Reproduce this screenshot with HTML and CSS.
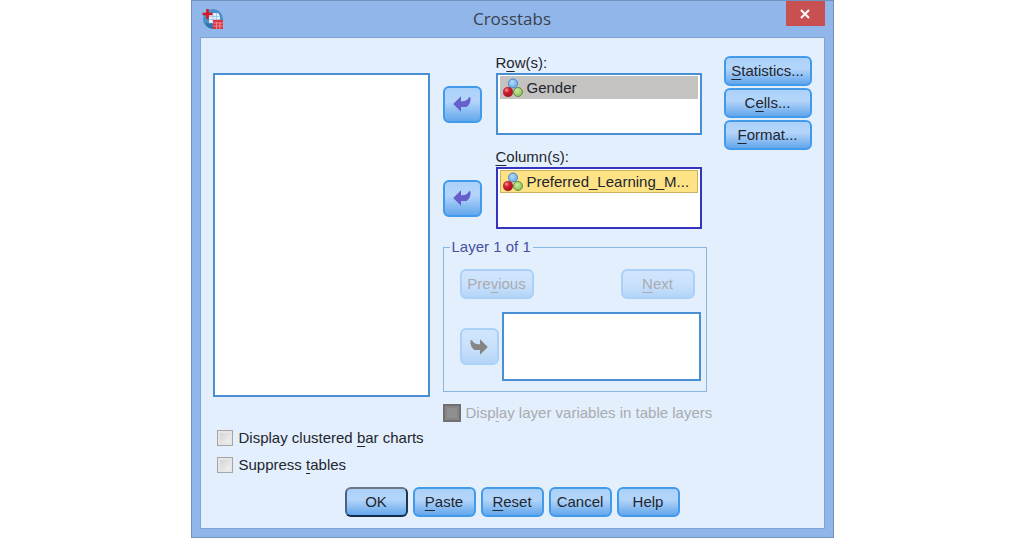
FILE: index.html
```html
<!DOCTYPE html>
<html lang="en">
  <head>
    <meta charset="UTF-8" />
    <meta name="viewport" content="width=device-width, initial-scale=1.0" />
    <title>Crosstabs</title>
    <link rel="stylesheet" href="styles.css">
  </head>
  <body>
    <!-- Shared icons -->
    <svg class="sprite" width="0" height="0" aria-hidden="true">
      <defs>
        <radialGradient id="red" cx="0.35" cy="0.3" r="0.7">
          <stop offset="0" stop-color="#f0a0a0" />
          <stop offset="0.4" stop-color="#d42030" />
          <stop offset="1" stop-color="#a81020" />
        </radialGradient>
        <radialGradient id="blue" cx="0.4" cy="0.35" r="0.7">
          <stop offset="0" stop-color="#b4dafa" />
          <stop offset="1" stop-color="#6aabe8" />
        </radialGradient>
        <radialGradient id="green" cx="0.4" cy="0.35" r="0.7">
          <stop offset="0" stop-color="#cdeaa0" />
          <stop offset="1" stop-color="#88bd58" />
        </radialGradient>
      </defs>
      <symbol id="nominal" viewBox="0 0 20 20">
        <circle cx="10" cy="5.5" r="4.5" fill="url(#blue)" stroke="#4384c8" />
        <circle cx="5" cy="14" r="4.8" fill="url(#red)" stroke="#a81828" stroke-width="0.6" />
        <circle cx="15" cy="14" r="4.5" fill="url(#green)" stroke="#5f8f3c" />
      </symbol>
      <symbol id="arrow" viewBox="0 0 18 18">
        <path d="M0.2 9 L8 1.200 V6.200 C11.500 6.800 14.500 5.500 16 2.300 L17.500 2.300 C18 6.500 16.500 10 13.500 12 H8 V16.800 Z" />
      </symbol>
    </svg>

    <main class="dialog">
      <header class="titlebar">
        <svg class="app-icon" viewBox="0 0 22 22" aria-hidden="true">
          <circle cx="11" cy="11" r="10" fill="#4a8fc6" />
          <path d="M3 15 A10 10 0 0 0 12 21 L12 16 Z" fill="#2f76b0" />
          <path d="M7 5 H16 L18 8 V15 H7 Z" fill="#e4f0fa" />
          <path d="M7 8.500 H18 M7 11.500 H18 M11 5 V15 M14.500 5 V15" stroke="#8ebbe0" stroke-width="0.7" />
          <path d="M5.500 1 V11 M0.500 6 H10.500" stroke="#d41828" stroke-width="2.600" />
          <rect x="11" y="12" width="10" height="9" fill="#dc3440" />
          <path d="M11 15 H21 M11 18 H21 M14.500 14 V21 M17.800 14 V21" stroke="#f29aa0" stroke-width="0.8" />
        </svg>
        <h1 class="title">Crosstabs</h1>
        <button class="close-btn" type="button" aria-label="Close">
          <svg width="12" height="12" viewBox="0 0 12 12"><path d="M2 2 L10 10 M10 2 L2 10" stroke="#fff" stroke-width="2" /></svg>
        </button>
      </header>

      <form class="panel">
        <div class="columns">
          <ul class="list source" role="listbox" aria-label="Variables"></ul>

          <div class="targets">
            <div class="field">
              <span class="field-label" id="rows-label">R<u>o</u>w(s):</span>
              <button class="btn arrow-btn" type="button" aria-label="Remove row variable">
                <svg class="arrow"><use href="#arrow" /></svg>
              </button>
              <ul class="list" role="listbox" aria-labelledby="rows-label">
                <li class="item" role="option"><svg class="item-icon"><use href="#nominal" /></svg>Gender</li>
              </ul>
            </div>

            <div class="field">
              <span class="field-label" id="cols-label"><u>C</u>olumn(s):</span>
              <button class="btn arrow-btn" type="button" aria-label="Remove column variable">
                <svg class="arrow"><use href="#arrow" /></svg>
              </button>
              <ul class="list focused" role="listbox" aria-labelledby="cols-label">
                <li class="item selected" role="option" aria-selected="true"><svg class="item-icon"><use href="#nominal" /></svg>Preferred_Learning_M...</li>
              </ul>
            </div>

            <fieldset class="layer">
              <legend>Layer 1 of 1</legend>
              <div class="layer-nav">
                <button class="btn" type="button" disabled>Pre<u>v</u>ious</button>
                <button class="btn" type="button" disabled><u>N</u>ext</button>
              </div>
              <div class="layer-body">
                <button class="btn arrow-btn" type="button" aria-label="Add layer variable" disabled>
                  <svg class="arrow right"><use href="#arrow" /></svg>
                </button>
                <ul class="list" role="listbox" aria-label="Layer variables"></ul>
              </div>
            </fieldset>

            <label class="check disabled"><input type="checkbox" disabled /><span>Disp<u>l</u>ay layer variables in table layers</span></label>
          </div>

          <div class="side-buttons">
            <button class="btn" type="button"><u>S</u>tatistics...</button>
            <button class="btn" type="button">C<u>e</u>lls...</button>
            <button class="btn" type="button"><u>F</u>ormat...</button>
          </div>
        </div>

        <div class="options">
          <label class="check"><input type="checkbox" /><span>Display clustered <u>b</u>ar charts</span></label>
          <label class="check"><input type="checkbox" /><span>Suppress <u>t</u>ables</span></label>
        </div>

        <footer class="actions">
          <button class="btn default" type="button">OK</button>
          <button class="btn" type="button"><u>P</u>aste</button>
          <button class="btn" type="button"><u>R</u>eset</button>
          <button class="btn" type="button">Cancel</button>
          <button class="btn" type="button">Help</button>
        </footer>
      </form>
    </main>
  </body>
</html>
```
FILE: styles.css
```css
* {
  margin: 0;
  padding: 0;
  box-sizing: border-box;
}

body {
  font-family: "Liberation Sans", Arial, sans-serif;
  font-size: 15px;
  line-height: 18px;
  color: #22262e;
  background-color: #fff;
  display: flex;
  justify-content: center;
}

.sprite {
  position: absolute;
}

u {
  text-underline-offset: 3px;
  text-decoration-thickness: 1px;
}

/* Window frame */
.dialog {
  width: 100%;
  max-width: 643px;
  padding: 0 8px 8px;
  background-color: #91b7ea;
  border: 1px solid #7391bd;
}

.titlebar {
  height: 36px;
  display: grid;
  grid-template-columns: 39px 1fr 39px;
  align-items: center;
}

.app-icon {
  width: 22px;
  height: 22px;
  margin-left: 2px;
}

.title {
  font-family: "Open Sans", "Noto Sans", sans-serif;
  font-size: 17px;
  font-weight: 400;
  color: #3a414d;
  text-align: center;
}

.close-btn {
  align-self: start;
  height: 25px;
  display: flex;
  justify-content: center;
  align-items: center;
  background-color: #c85050;
  border: none;
}

.panel {
  padding: 15px 12px 11px;
  background-color: #e3effc;
  border: 1px solid #82a4d3;
}

.columns {
  display: grid;
  grid-template-columns: 217px minmax(0, 1fr) 88px;
  column-gap: 13px;
}

/* Lists */
.list {
  list-style: none;
  padding: 1px 2px;
  background-color: #fff;
  border: 2px solid #4a8fd2;
}

.list.focused {
  border-color: #3434be;
}

.source {
  margin: 20px 0 25px;
}

.item {
  display: flex;
  align-items: center;
  gap: 4px;
  height: 23px;
  padding-left: 3px;
  white-space: nowrap;
  background-color: #c5c3c1;
}

.item.selected {
  background-color: #fde286;
  border: 1px solid #c9b268;
  padding-left: 2px;
}

.item-icon {
  width: 20px;
  height: 20px;
}

/* Buttons */
.btn {
  height: 30px;
  font: inherit;
  color: #22262e;
  background: linear-gradient(#abd1f9, #b4d5fa 40%, #64a7ec);
  border: 2px solid #429aeb;
  border-radius: 6px;
}

.btn.default {
  border-color: #6c7686 #20344e #142c4a #4a6486;
}

.btn:disabled {
  color: #a9abb2;
  background: linear-gradient(#d0e5fd, #cbe1fb 50%, #b3d5f8);
  border-color: #aad2f8;
}

.arrow-btn {
  width: 39px;
  height: 37px;
  display: flex;
  justify-content: center;
  align-items: center;
}

.arrow {
  width: 18px;
  height: 18px;
  fill: #665fcc;
}

.arrow.right {
  fill: #858585;
  transform: scaleX(-1);
}

/* Target fields */
.targets {
  margin-right: 4px;
}

.field {
  display: grid;
  grid-template-columns: 39px 1fr;
  grid-template-rows: 20px 62px;
  column-gap: 14px;
  align-items: center;
  margin: 0 5px 12px 0;
}

.field-label {
  grid-column: 2;
}

.field .list {
  height: 62px;
}

.layer {
  margin: -3px 0 12px;
  padding: 13px 5px 10px 16px;
  border: 1px solid #88b4e0;
}

.layer legend {
  margin-left: -10px;
  padding: 0 2px;
  color: #4850a0;
}

.layer-nav {
  display: flex;
  justify-content: space-between;
  padding-right: 6px;
  margin-bottom: 13px;
}

.layer-nav .btn {
  width: 74px;
}

.layer-body {
  display: grid;
  grid-template-columns: 39px 1fr;
  column-gap: 3px;
  align-items: center;
}

.layer-body .list {
  height: 69px;
}

.side-buttons {
  display: flex;
  flex-direction: column;
  gap: 2px;
  padding-top: 3px;
}

/* Checkboxes */
.check {
  display: flex;
  align-items: center;
  gap: 6px;
  white-space: nowrap;
}

.check input {
  appearance: none;
  flex: none;
  width: 16px;
  height: 16px;
  background: linear-gradient(135deg, #cfcfcf, #f6f6f6);
  border: 1px solid #a5a5a5;
  box-shadow: inset 0 0 0 2px #e6e6e6;
}

.check.disabled {
  gap: 5px;
  color: #a8abb1;
}

.check.disabled input {
  width: 18px;
  height: 18px;
  background: #8f8f8f;
  border: 2px solid #707070;
  box-shadow: inset 0 0 0 2px #858585;
}

.options {
  display: flex;
  flex-direction: column;
  gap: 9px;
  padding: 7px 4px 13px;
}

.actions {
  display: flex;
  justify-content: center;
  gap: 5px;
}

.actions .btn {
  width: 63px;
}
```
